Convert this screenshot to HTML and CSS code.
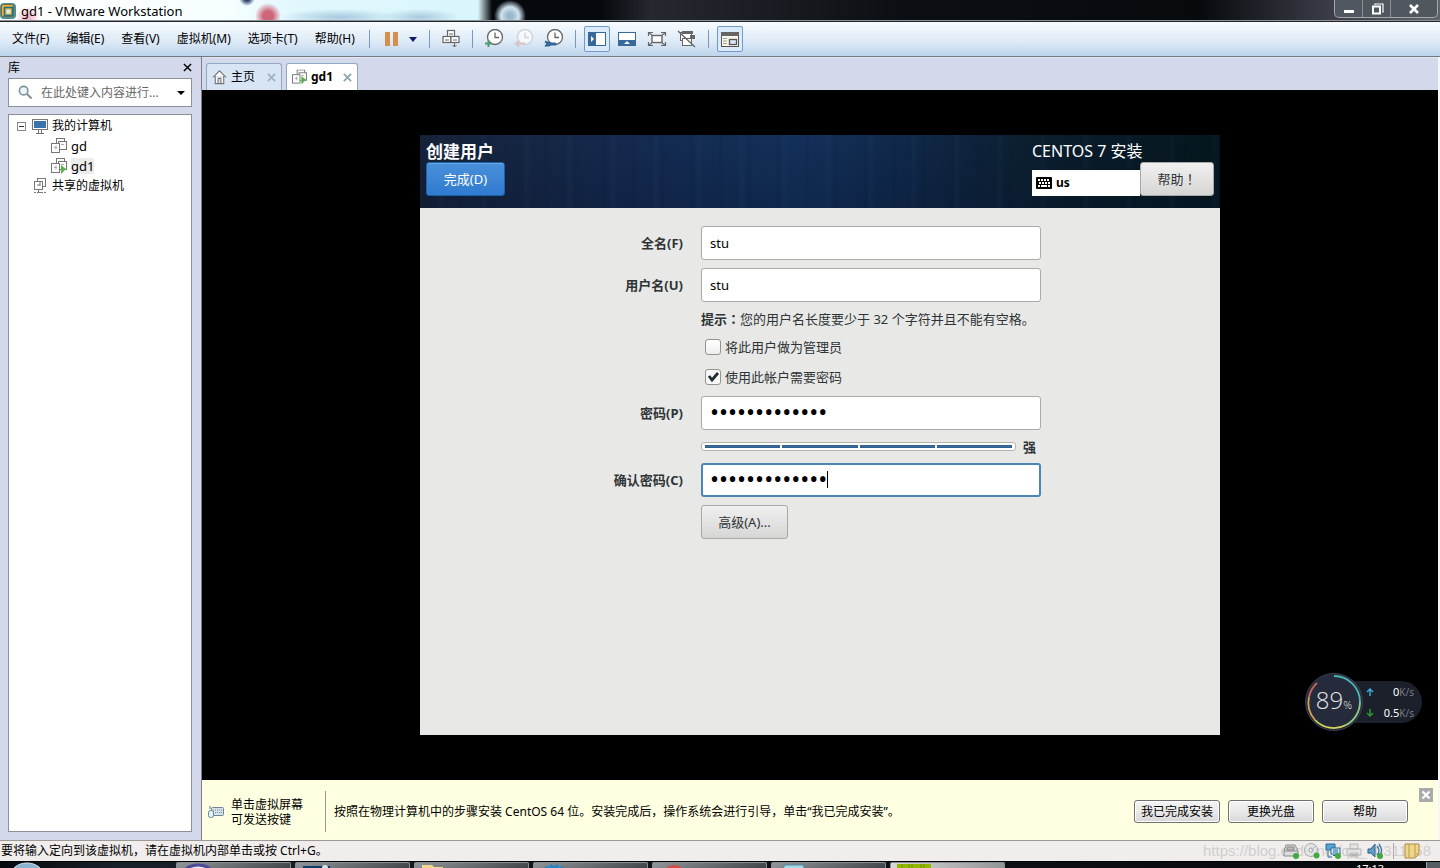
FILE: index.html
```html
<!DOCTYPE html>
<html lang="zh-CN">
<head>
<meta charset="utf-8">
<title>gd1 - VMware Workstation</title>
<link rel="stylesheet" href="styles.css">
</head>
<body>
<svg class="defs" width="0" height="0" aria-hidden="true">
  <symbol id="vm" viewBox="0 0 16 16"><g fill="#fff" stroke="#777" stroke-width="1"><rect x="5.500" y=".5" width="8" height="8"/><rect x="7.500" y="3.500" width="8" height="8"/><rect x=".5" y="5.500" width="8" height="9"/></g><path d="M3 9.500h3m-1-2v4m5-5h3" stroke="#aaa" fill="none"/></symbol>
  <symbol id="clock" viewBox="0 0 20 20"><circle cx="11" cy="8" r="7.500" fill="#fff" stroke="currentColor" stroke-width="1.300"/><path d="M11 3.500V8.500h4" fill="none" stroke="currentColor" stroke-width="1.300"/></symbol>
</svg>

<header class="titlebar">
  <svg class="logo" viewBox="0 0 16 16"><rect x="0" y="0" width="16" height="16" rx="4" fill="#4b8f9b"/><rect x="1.500" y="1.500" width="12" height="12" rx="2" fill="#e6b344" stroke="#7c6a35"/><rect x="4.500" y="4.500" width="8" height="8" fill="#e6b344" stroke="#26707f" stroke-width="1.600"/><rect x="6.500" y="6.500" width="4" height="4" fill="#d9ecee"/></svg>
  <h1>gd1 - VMware Workstation</h1>
  <div class="window-controls">
    <button aria-label="最小化"><svg viewBox="0 0 16 16"><rect x="3" y="9" width="10" height="3" fill="#fff"/></svg></button>
    <button aria-label="还原"><svg viewBox="0 0 16 16"><path d="M6 4V3h8v8h-1" fill="none" stroke="#fff" stroke-width="1.200"/><rect x="4" y="5.500" width="7" height="7" fill="none" stroke="#fff" stroke-width="2"/></svg></button>
    <button class="wide" aria-label="关闭"><svg viewBox="0 0 16 16"><path d="M4 4l8 8m0-8l-8 8" stroke="#fff" stroke-width="2.600"/></svg></button>
  </div>
</header>

<nav class="menubar">
  <div class="menus"><button class="menu">文件(F)</button><button class="menu">编辑(E)</button><button class="menu">查看(V)</button><button class="menu">虚拟机(M)</button><button class="menu">选项卡(T)</button><button class="menu">帮助(H)</button></div>
  <span class="sep"></span>
  <button class="tool" aria-label="暂停"><svg viewBox="0 0 20 20"><path d="M4 3h5v14H4zm8 0h5v14h-5z" fill="#d2914f"/></svg></button>
  <button class="tool narrow" aria-label="电源选项"><svg viewBox="0 0 14 20"><path d="M3 8h8l-4 5z" fill="#111b66"/></svg></button>
  <span class="sep"></span>
  <button class="tool" aria-label="发送 Ctrl+Alt+Del"><svg viewBox="0 0 20 20"><g fill="#fff" stroke="#666" stroke-width="1.200"><rect x="6.500" y="1.500" width="7" height="6"/><rect x="2" y="7.500" width="8" height="6"/><rect x="10" y="7.500" width="8" height="6"/></g><path d="M8 5h4M4 11h4m4 0h4M13.500 14v4m-2-2l2 2 2-2" fill="none" stroke="#666"/></svg></button>
  <span class="sep"></span>
  <button class="tool ink" aria-label="拍摄快照"><svg viewBox="0 0 20 20"><use href="#clock"/><path d="M1 14.500h7M4.500 11v7" stroke="#4e9a72" stroke-width="2"/></svg></button>
  <button class="tool faded" aria-label="恢复快照" disabled><svg viewBox="0 0 20 20"><use href="#clock"/><path d="M2 14.500h9M5 11.500l-3 3 3 3" fill="none" stroke="#d9b8ae" stroke-width="2"/></svg></button>
  <button class="tool ink" aria-label="管理快照"><svg viewBox="0 0 20 20"><use href="#clock"/><path d="M1 12.500l3 1.500M1 17l3-1" stroke="#35689b" stroke-width="2"/><circle cx="4.500" cy="15" r="2.500" fill="#35689b"/><path d="M5 15h6" stroke="#35689b" stroke-width="3" stroke-linecap="round"/></svg></button>
  <span class="sep"></span>
  <button class="tool on" aria-label="显示库"><svg viewBox="0 0 20 20"><rect x="1.500" y="3.500" width="17" height="13" fill="#fff" stroke="#38699b"/><path d="M1 3h8v14H1z" fill="#38699b"/><path d="M4 7l3 3-3 3z" fill="#fff"/></svg></button>
  <button class="tool" aria-label="缩略图栏"><svg viewBox="0 0 20 20"><rect x="1.500" y="3.500" width="17" height="13" fill="#fff" stroke="#38699b"/><path d="M1 11h18v6H1z" fill="#38699b"/><path d="M7 15l3-3 3 3z" fill="#fff"/></svg></button>
  <button class="tool" aria-label="全屏"><svg viewBox="0 0 20 20"><rect x="5" y="6.500" width="10" height="7" fill="#fff" stroke="#666" stroke-width="1.400"/><path d="M1.500 7V3.500H6m8 0h4.500V7m0 6v3.500H14m-8 0H1.500V13M2 4l3 2m13-2l-3 2M2 16l3-2m13 2l-3-2" fill="none" stroke="#666" stroke-width="1.200"/></svg></button>
  <button class="tool" aria-label="Unity"><svg viewBox="0 0 20 20"><rect x="3.500" y="3.500" width="11" height="8" fill="#fff" stroke="#666"/><path d="M5 2h11v3H5z" fill="#666"/><rect x="5.500" y="9.500" width="9" height="7" fill="#fff" stroke="#666"/><path d="M13 6h5v4h-5z" fill="#666"/><path d="M1 2l17 16" stroke="#666" stroke-width="1.300"/></svg></button>
  <span class="sep"></span>
  <button class="tool on" aria-label="控制台视图"><svg viewBox="0 0 20 20"><rect x="1.500" y="3.500" width="17" height="14" fill="#f7f7ec" stroke="#555"/><path d="M1 3h18v4H1z" fill="#666"/><path d="M3 9.500h4m-4 2.500h4m-4 2.500h4" stroke="#a8a489"/><rect x="9.500" y="10.500" width="7" height="5" fill="#dce7f5" stroke="#555" stroke-width="1.300"/></svg></button>
</nav>

<main class="workspace">
  <aside class="library">
    <div class="library-head"><h2>库</h2><button aria-label="关闭库"><svg viewBox="0 0 10 10"><path d="M1 1l8 8m0-8l-8 8" stroke="#000" stroke-width="1.600"/></svg></button></div>
    <div class="search">
      <svg viewBox="0 0 16 16"><circle cx="6" cy="6" r="4.500" fill="#eef7fb" stroke="#7e9299" stroke-width="1.700"/><path d="M9.500 9.500l5 5" stroke="#7e9299" stroke-width="2.200"/></svg>
      <input type="text" aria-label="搜索库" placeholder="在此处键入内容进行...">
      <button aria-label="搜索选项"><svg viewBox="0 0 8 8"><path d="M0 2h8L4 6z"/></svg></button>
    </div>
    <ul class="tree">
      <li><svg class="toggle" viewBox="0 0 9 9"><rect x=".5" y=".5" width="8" height="8" fill="#fff" stroke="#888"/><path d="M2 4.500h5" stroke="#333"/></svg><svg viewBox="0 0 16 16"><rect x=".5" y="1.500" width="15" height="10" fill="#fff" stroke="#777"/><path d="M2 3h12v7H2z" fill="#3a74ae"/><path d="M6.500 12v3m3-3v3M4 15.500h8" stroke="#777"/></svg><span>我的计算机</span></li>
      <li class="child"><svg viewBox="0 0 16 16"><use href="#vm"/></svg><span>gd</span></li>
      <li class="child"><svg viewBox="0 0 16 16"><use href="#vm"/><path d="M10 7l5 4-5 5z" fill="#58b34b"/></svg><span class="current">gd1</span></li>
      <li class="shared"><svg viewBox="0 0 16 16"><g fill="#fff" stroke="#777"><rect x="5.500" y=".5" width="8" height="8"/><rect x="2.500" y="3.500" width="8" height="8"/></g><path d="M5 7h3m0-4v5M6.500 12v3M2 14.500h2m1 0h6m1 0h2" fill="none" stroke="#777"/></svg><span>共享的虚拟机</span></li>
    </ul>
  </aside>

  <section class="content">
    <div class="tabs">
      <div class="tab"><svg viewBox="0 0 16 16"><path d="M1 8.500L8 1.500l7 7M3.500 7v8h9V7M6.500 15V9.500h3V15" fill="#fff" stroke="#777" stroke-width="1.200"/></svg><button class="tab-name">主页</button><button class="tab-close" aria-label="关闭主页"><svg viewBox="0 0 10 10"><path d="M1 1l8 8m0-8l-8 8" stroke="#9fb3bf" stroke-width="2"/></svg></button></div>
      <div class="tab active"><svg viewBox="0 0 16 16"><use href="#vm"/><path d="M10 7l5 4-5 5z" fill="#58b34b"/></svg><button class="tab-name">gd1</button><button class="tab-close" aria-label="关闭 gd1"><svg viewBox="0 0 10 10"><path d="M1 1l8 8m0-8l-8 8" stroke="#8ea6b4" stroke-width="2"/></svg></button></div>
    </div>

    <div class="stage">
      <div class="installer">
        <header class="installer-head">
          <div><h2>创建用户</h2><button class="done">完成(D)</button></div>
          <div class="head-right">
            <p>CENTOS 7 安装</p>
            <div class="head-tools">
              <button class="layout"><svg viewBox="0 0 16 12"><rect width="16" height="12" rx="1"/><path d="M2 3h12M3 6h11" stroke="#fff" stroke-width="2" stroke-dasharray="2 1"/><path d="M2 9h2m1 0h6m1 0h2" stroke="#fff" stroke-width="2"/></svg>us</button>
              <button class="gtk help">帮助<span class="mark" lang="zh-TW">！</span></button>
            </div>
          </div>
        </header>
        <form class="form">
          <label class="name" for="fullname">全名(F)</label><input class="field" id="fullname" type="text" value="stu">
          <label class="name" for="username">用户名(U)</label><input class="field" id="username" type="text" value="stu">
          <p class="second hint"><b>提示<span class="mark" lang="zh-TW">：</span></b>您的用户名长度要少于 32 个字符并且不能有空格。</p>
          <label class="second check"><input type="checkbox">将此用户做为管理员</label>
          <label class="second check"><input type="checkbox" checked>使用此帐户需要密码</label>
          <label class="name" for="pw">密码(P)</label><input class="field" id="pw" type="password" value="abcdefghijklm">
          <div class="second strength"><div class="meter"><i></i><i></i><i></i><i></i></div><b>强</b></div>
          <label class="name" for="confirm">确认密码(C)</label><div class="caret-box"><input class="field focused" id="confirm" type="password" value="abcdefghijklm"></div>
          <button class="second gtk advanced" type="button">高级(A)...</button>
        </form>
      </div>

      <div class="speed">
        <div class="rates">
          <div><svg viewBox="0 0 8 8"><path d="M4 8V2M1 4l3-3 3 3" fill="none" stroke="#3ba6dd" stroke-width="1.500"/></svg><span>0<small>K/s</small></span></div>
          <div><svg viewBox="0 0 8 8"><path d="M4 0v6M1 4l3 3 3-3" fill="none" stroke="#2a9632" stroke-width="1.500"/></svg><span>0.5<small>K/s</small></span></div>
        </div>
        <div class="dial">
          <svg viewBox="0 0 58 58"><circle cx="29" cy="29" r="28.500" fill="#252b3a" stroke="#3a4051"/><g fill="none" stroke-width="1.800"><path d="M29 3a26 26 0 0 1 26 26" stroke="#4bb6b0"/><path d="M55 29a26 26 0 0 1-14 23" stroke="#8fcb8b"/><path d="M41 52A26 26 0 0 1 10 47" stroke="#d2d65a"/><path d="M10 47A26 26 0 0 1 4 24" stroke="#dba04e"/><path d="M4 24A26 26 0 0 1 12 10" stroke="#c8625c"/></g></svg>
          <span>89<small>%</small></span>
        </div>
      </div>
    </div>

    <div class="notice">
      <svg class="keyboard" viewBox="0 0 16 14"><path d="M2 1v3" stroke="#667"/><rect x="3.500" y="2.500" width="12" height="8" rx="1" fill="#d6e1e8" stroke="#6e8796"/><path d="M5 5h9M5 7.500h9" stroke="#7a919e" stroke-dasharray="1 1"/><rect x=".5" y="5.500" width="5" height="7" rx="2" fill="#e6f1f6" stroke="#5f8699"/></svg>
      <p class="tip">单击虚拟屏幕<br>可发送按键</p>
      <p class="guide">按照在物理计算机中的步骤安装 CentOS 64 位。安装完成后，操作系统会进行引导，单击“我已完成安装”。</p>
      <div class="notice-actions"><button>我已完成安装</button><button>更换光盘</button><button>帮助</button></div>
      <button class="notice-close" aria-label="关闭提示"><svg viewBox="0 0 14 14"><path d="M3.500 3.500l7 7m0-7l-7 7" stroke="#fff" stroke-width="2.200"/></svg></button>
    </div>
  </section>
</main>

<footer class="status">
  <p>要将输入定向到该虚拟机，请在虚拟机内部单击或按 Ctrl+G。</p>
  <span class="watermark">https://blog.csdn.net/qq_40311158</span>
  <div class="devices">
    <svg viewBox="0 0 16 16"><path d="M3 2h9l3 6v5H1V8z" fill="#ddd" stroke="#888"/><path d="M1 8h14M4 4h7v3H4z" stroke="#888" fill="#bbb"/><circle cx="13" cy="13" r="3" fill="#40a940"/></svg>
    <svg viewBox="0 0 16 16"><circle cx="7" cy="7" r="6.500" fill="#e4e4e6" stroke="#aaa"/><circle cx="7" cy="7" r="2" fill="#fff" stroke="#999"/><path d="M7 7l5-4" stroke="#bbb"/><circle cx="12.500" cy="12.500" r="3" fill="#40a940"/></svg>
    <svg viewBox="0 0 16 16"><path d="M1 1h9v6H1z" fill="#58a4d4" stroke="#276996"/><path d="M3 8v6h4" stroke="#276996" fill="none"/><path d="M6 5h9v6H6z" fill="#d5ecfa" stroke="#276996"/><path d="M8 7h5M8 9h5M8 12.500h4" stroke="#276996"/><circle cx="13" cy="13" r="3" fill="#40a940"/></svg>
    <svg viewBox="0 0 16 16"><path d="M4 1h8v5H4zM1 6h14v6H1zM4 10h8v4H4z" fill="#e4e4e4" stroke="#b5b5b5"/><path d="M5 12h6" stroke="#999"/></svg>
    <svg viewBox="0 0 16 16"><path d="M1 6h3l4-5v13L4 10H1z" fill="#629dc9" stroke="#2d6490"/><path d="M10 3q4 5 0 9m2-11q5 7 0 13" fill="none" stroke="#3b789f" stroke-width="1.300"/><circle cx="13" cy="13" r="3" fill="#40a940"/></svg>
    <i></i>
    <svg viewBox="0 0 16 16"><path d="M1 1h14v10l-4 4H1z" fill="#efd68a" stroke="#a98b42"/><path d="M11 15v-4h4M5 1v13M11 1v9" fill="none" stroke="#b99a50"/></svg>
  </div>
</footer>

<div class="taskbar">
  <div class="start"><svg viewBox="0 0 30 7"><ellipse cx="15" cy="15" rx="17" ry="14" fill="#8bb4d2" stroke="#d2e3ef"/></svg></div>
  <button aria-label="浏览器"><svg viewBox="0 0 30 7"><ellipse cx="15" cy="11" rx="14" ry="9" fill="#e8eaf6" stroke="#4d4a98" stroke-width="3"/></svg></button>
  <button aria-label="媒体"><svg viewBox="0 0 30 7"><path d="M1 7V3h27v4z" fill="#123b65"/><circle cx="23" cy="5" r="3" fill="#d8e4ed"/></svg></button>
  <button aria-label="文件夹"><svg viewBox="0 0 30 7"><path d="M1 7V2h10l2 2h9v3z" fill="#efd991"/></svg></button>
  <button aria-label="设置"><svg viewBox="0 0 30 7"><path d="M3 7l3-4 3 1 2-3 3 2 3-2 2 3 4-1 2 4z" fill="#2786c8"/></svg></button>
  <button aria-label="音乐"><svg viewBox="0 0 30 7"><ellipse cx="15" cy="11" rx="11" ry="9" fill="#d34f46"/></svg></button>
  <button aria-label="记事本"><svg viewBox="0 0 30 7"><path d="M4 7l3-5h18l2 5z" fill="#a7d6e4" stroke="#528fa3"/></svg></button>
  <button class="lit" aria-label="监视器"><svg viewBox="0 0 34 7"><path d="M0 1h34v6H0z" fill="#93b800"/><path d="M5 1v6m7-6v6m3-6v6m9-6v6m3-6v6" stroke="#6d9500"/></svg></button>
  <time>17:13</time>
  <span class="desktop"></span>
</div>
</body>
</html>
```
FILE: styles.css
```css
* { box-sizing: border-box; }
body {
  margin: 0;
  height: 100vh;
  display: flex;
  flex-direction: column;
  overflow: hidden;
  background: #d3d9eb;
  color: #000;
  font: 12px/16px "Noto Sans", "Noto Sans CJK SC", sans-serif;
}
h1, h2, p, ul { margin: 0; padding: 0; font: inherit; }
button, input { font: inherit; color: inherit; }
button { border: 0; padding: 0; background: none; white-space: nowrap; }
svg { display: block; flex: none; }
.defs { position: absolute; }

.titlebar {
  flex: none;
  height: 22px;
  display: flex;
  align-items: center;
  gap: 5px;
  border-bottom: 1px solid #20252c;
  box-shadow: inset 0 -1px #8b929b;
  background:
    radial-gradient(circle at 268px 16px, #cf6579 5px, transparent 13px),
    radial-gradient(circle at 28px 18px, #f3b8c4 2px, transparent 12px),
    radial-gradient(circle at 247px -2px, #34466f 3px, transparent 8px),
    radial-gradient(60px 8px at 340px 17px, #a9c9de, transparent),
    radial-gradient(40px 8px at 420px 17px, #a9c9de, transparent),
    radial-gradient(circle at 510px 16px, #9db8cc 3px, #cfe4ef 9px, transparent 16px),
    linear-gradient(90deg, #fff 0, #f6feff 230px, #dff7fd 300px, #d9f6fc 478px, #05080c 492px, #05080c 600px, #25282f 650px, #0b0f13 900px, #070a0d 1200px, #3a3d46 1330px, #5f6469 100%);
}
.logo { width: 16px; height: 18px; }
.titlebar h1 { flex: 1; font-size: 13px; }
.window-controls { display: flex; align-self: flex-start; margin-right: 2px; border: 1px solid #a3a8ad; border-top: 0; border-radius: 0 0 5px 5px; background: #50575e; }
.window-controls button { width: 28px; height: 17px; display: grid; place-items: center; border-right: 1px solid #8c9297; }
.window-controls .wide { width: 46px; border: 0; }
.window-controls svg { width: 16px; height: 16px; }

.menubar {
  flex: none;
  height: 35px;
  display: flex;
  align-items: center;
  padding: 0 4px;
  background: linear-gradient(#f8fcff, #dce9f6 60%, #bdd4ec);
  border-bottom: 1px solid #74787f;
}
.menus { display: flex; gap: 1px; }
.menu { padding: 0 8px; height: 26px; }
.sep { width: 1px; height: 18px; margin: 0 6px; background: #7c98b8; }
.tool { width: 26px; height: 26px; margin: 0 2px; display: grid; place-items: center; border: 1px solid transparent; border-radius: 2px; }
.tool svg { width: 20px; height: 20px; }
.tool.narrow { width: 14px; margin: 0 3px 0 0; border: 0; }
.narrow svg { width: 14px; }
.ink { color: #666; }
.faded { color: #c5c5c8; opacity: .7; }
.on { border-color: #6e9bc8; background: #dbeafa; }

.workspace { flex: 1; min-height: 0; display: flex; }
.library { flex: none; width: 202px; padding: 0 9px 8px 8px; display: flex; flex-direction: column; border-right: 1px solid #7b7f88; }
.library-head { height: 21px; display: flex; justify-content: space-between; align-items: center; }
.library-head svg { width: 9px; height: 9px; }
.search { height: 29px; display: flex; align-items: center; padding: 0 6px 0 9px; background: #fff; border: 1px solid #8b8f99; }
.search > svg { width: 15px; height: 15px; margin-right: 8px; }
.search input { flex: 1; min-width: 0; padding: 0; border: 0; outline: 0; background: none; }
.search input::placeholder { color: #666; opacity: 1; }
.search button svg { width: 8px; height: 8px; }
.tree { flex: 1; margin-top: 7px; padding: 1px 0 0 8px; list-style: none; background: #fff; border: 1px solid #8b8f99; }
.tree li { height: 20px; display: flex; align-items: center; gap: 4px; }
.tree svg { width: 16px; height: 16px; }
.tree .toggle { width: 9px; height: 9px; margin-right: 2px; }
.tree .child { padding-left: 34px; font-size: 13px; }
.tree .shared { padding-left: 15px; }
.current { background: #ececec; }

.content { flex: 1; min-width: 0; display: flex; flex-direction: column; border-right: 2px solid #f4f6fa; }
.tabs { flex: none; height: 33px; display: flex; align-items: flex-end; gap: 4px; padding-left: 4px; border-top: 1px solid #e2e6f1; }
.tab { height: 27px; display: flex; align-items: center; gap: 4px; padding: 0 5px; border: 1px solid #8ea9c6; border-bottom: 0; border-radius: 3px 3px 0 0; background: #d8e5f5; }
.tab > svg { width: 15px; height: 16px; }
.tab.active { background: #fff; }
.tab.active .tab-name { font-weight: 700; }
.tab-close { margin-left: 8px; }
.tab-close svg { width: 9px; height: 9px; }
.tab.active .tab-close { margin-left: 6px; }

.stage { position: relative; flex: 1; min-height: 0; display: grid; place-items: center; background: #000; }
.installer { width: 100%; max-width: 800px; min-height: 600px; background: #e8e8e6; color: #2e3436; font-size: 13px; line-height: 18px; }
.installer-head {
  height: 73px;
  display: flex;
  justify-content: space-between;
  padding: 6px 6px 0;
  color: #fff;
  background:
    repeating-linear-gradient(90deg, transparent 0 17px, rgba(60, 110, 170, .06) 20px, transparent 26px 43px),
    repeating-linear-gradient(90deg, transparent 0 7px, rgba(5, 15, 40, .09) 10px, transparent 14px 29px),
    linear-gradient(transparent, rgba(5, 15, 40, .25)),
    linear-gradient(90deg, #162238 0, #142b50 28%, #12305a 48%, #10294a 60%, #0b1e2e 77%, #04161c 100%);
}
.installer-head h2, .installer-head p { font-size: 16px; line-height: 21px; }
.installer-head h2 { font-size: 17px; font-weight: 700; }
.done { width: 79px; height: 34px; border: 1px solid #1f60a8; border-radius: 3px; background: linear-gradient(#4a90d9, #2f7bd0); box-shadow: inset 0 1px #68a7e6; }
.head-tools { display: flex; align-items: flex-end; }
.layout { width: 108px; height: 26px; padding-left: 4px; display: flex; align-items: center; gap: 4px; background: #fff; color: #000; font-size: 12px; font-weight: 700; }
.layout svg { width: 16px; height: 12px; }
.gtk { height: 34px; border: 1px solid #a8a8a4; border-radius: 3px; background: linear-gradient(#f0f0f0, #d6d6d5); color: #2e3436; }
.help { width: 74px; }
.mark { font-family: "Noto Sans CJK TC", sans-serif; }
.form {
  display: grid;
  grid-template-columns: 33% minmax(0, 340px);
  grid-template-rows: 38px 34px 26px 22px 30px 34px 25px 34px 38px;
  gap: 4px 17px;
  padding-top: 18px;
}
.name { height: 34px; display: flex; align-items: center; justify-content: flex-end; padding-right: 1px; font-weight: 700; }
.field { width: 100%; height: 34px; padding: 0 8px; border: 1px solid #aaaba7; border-radius: 3px; outline: 0; background: #fff; color: #000; }
.field[type="password"] { padding-bottom: 3px; font-family: "Noto Sans", sans-serif; font-size: 24px; line-height: 28px; }
.second { grid-column: 2; }
.hint { align-self: center; white-space: nowrap; }
.check { display: flex; align-items: center; gap: 4px; padding-left: 4px; }
.check input { appearance: none; width: 16px; height: 16px; margin: 0; border: 1px solid #93948f; border-radius: 3px; background: linear-gradient(#fff, #eee); }
.check input:checked { background: url("data:image/svg+xml,%3Csvg xmlns='http://www.w3.org/2000/svg' viewBox='0 0 14 14'%3E%3Cpath d='M3 6l3 4 6-7' fill='none' stroke='%23222d32' stroke-width='2.800'/%3E%3C/svg%3E") center / 14px no-repeat, #f8f8f8; }
.strength { display: flex; align-items: center; gap: 7px; }
.meter { width: 315px; height: 9px; padding: 2px 3px; display: flex; gap: 2px; border: 1px solid #b4b5b1; border-radius: 3px; background: #fff; }
.meter i { flex: 1; background: #396fa6; border: 1px solid #305e8d; }
.caret-box { position: relative; }
.caret-box::after { content: ""; position: absolute; left: 126px; top: 8px; width: 1px; height: 17px; background: #000; }
.field.focused { border: 2px solid #4a86b8; padding: 0 7px 3px; }
.advanced { width: 87px; align-self: end; }

.speed { position: absolute; right: 16px; bottom: 49px; width: 117px; height: 58px; display: flex; align-items: center; justify-content: flex-end; color: #fff; }
.rates { width: 84px; height: 42px; padding: 0 8px 0 27px; border-radius: 0 21px 21px 0; background: #1c202b; font-size: 11px; }
.rates div { height: 21px; display: flex; justify-content: space-between; align-items: center; }
.rates svg { width: 8px; height: 8px; margin-left: 1px; }
.rates small { color: #777d89; font-size: 10px; }
.dial { position: absolute; left: 0; top: 0; width: 58px; height: 58px; display: grid; place-items: center; }
.dial > * { grid-area: 1 / 1; }
.dial svg { width: 58px; height: 58px; }
.dial span { font: 300 24px/28px "Open Sans", sans-serif; color: #e4e6ea; }
.dial small { font-size: 11px; }

.notice { position: relative; flex: none; min-height: 60px; display: flex; align-items: center; padding: 3px 30px 0 6px; background: #ffffe1; }
.keyboard { width: 16px; height: 14px; margin-right: 7px; }
.tip { width: 94px; line-height: 15px; }
.guide { flex: 1; min-width: 0; height: 41px; display: flex; align-items: center; padding-left: 8px; border-left: 1px solid #9b9b91; }
.notice-actions { display: flex; gap: 8px; }
.notice-actions button { width: 86px; height: 23px; border: 1px solid #707070; border-radius: 3px; background: linear-gradient(#f4f4f4, #e9e9e9 50%, #d8d8da); box-shadow: inset 0 0 0 1px #fff; }
.notice-close { position: absolute; right: 5px; top: 8px; width: 14px; height: 14px; background: #aaa; }
.notice-close svg { width: 14px; height: 14px; }

.status { position: relative; flex: none; height: 21px; display: flex; align-items: center; justify-content: space-between; padding: 0 20px 0 1px; border-top: 1px solid #9c9995; background: #f0edec; }
.devices { position: relative; display: flex; gap: 5px; }
.devices svg { width: 16px; height: 16px; }
.devices i { width: 1px; background: #aaa; margin: 0 5px; }
.watermark { position: absolute; right: 9px; top: 0; font: 15px/20px "Liberation Sans", sans-serif; color: rgba(190, 188, 188, .65); }

.taskbar { flex: none; height: 7px; display: flex; gap: 4px; overflow: hidden; border-top: 1px solid #000; background: linear-gradient(90deg, #05090d, #182027 8%, #05080b); }
.start { width: 172px; padding-left: 12px; }
.taskbar svg { width: 30px; height: 7px; }
.taskbar button { width: 115px; height: 7px; padding-left: 6px; border: 1px solid #8a8e91; border-bottom: 0; border-radius: 2px 2px 0 0; background: linear-gradient(160deg, #90969a, #3c4246); }
.taskbar .lit { background: linear-gradient(90deg, #d7dad9, #909596); }
.taskbar .lit svg { width: 34px; }
.taskbar time { margin-left: auto; color: #fff; font-size: 11px; line-height: 14px; }
.desktop { width: 14px; margin-left: 38px; background: #555d65; border-left: 1px solid #9aa2aa; }
```
